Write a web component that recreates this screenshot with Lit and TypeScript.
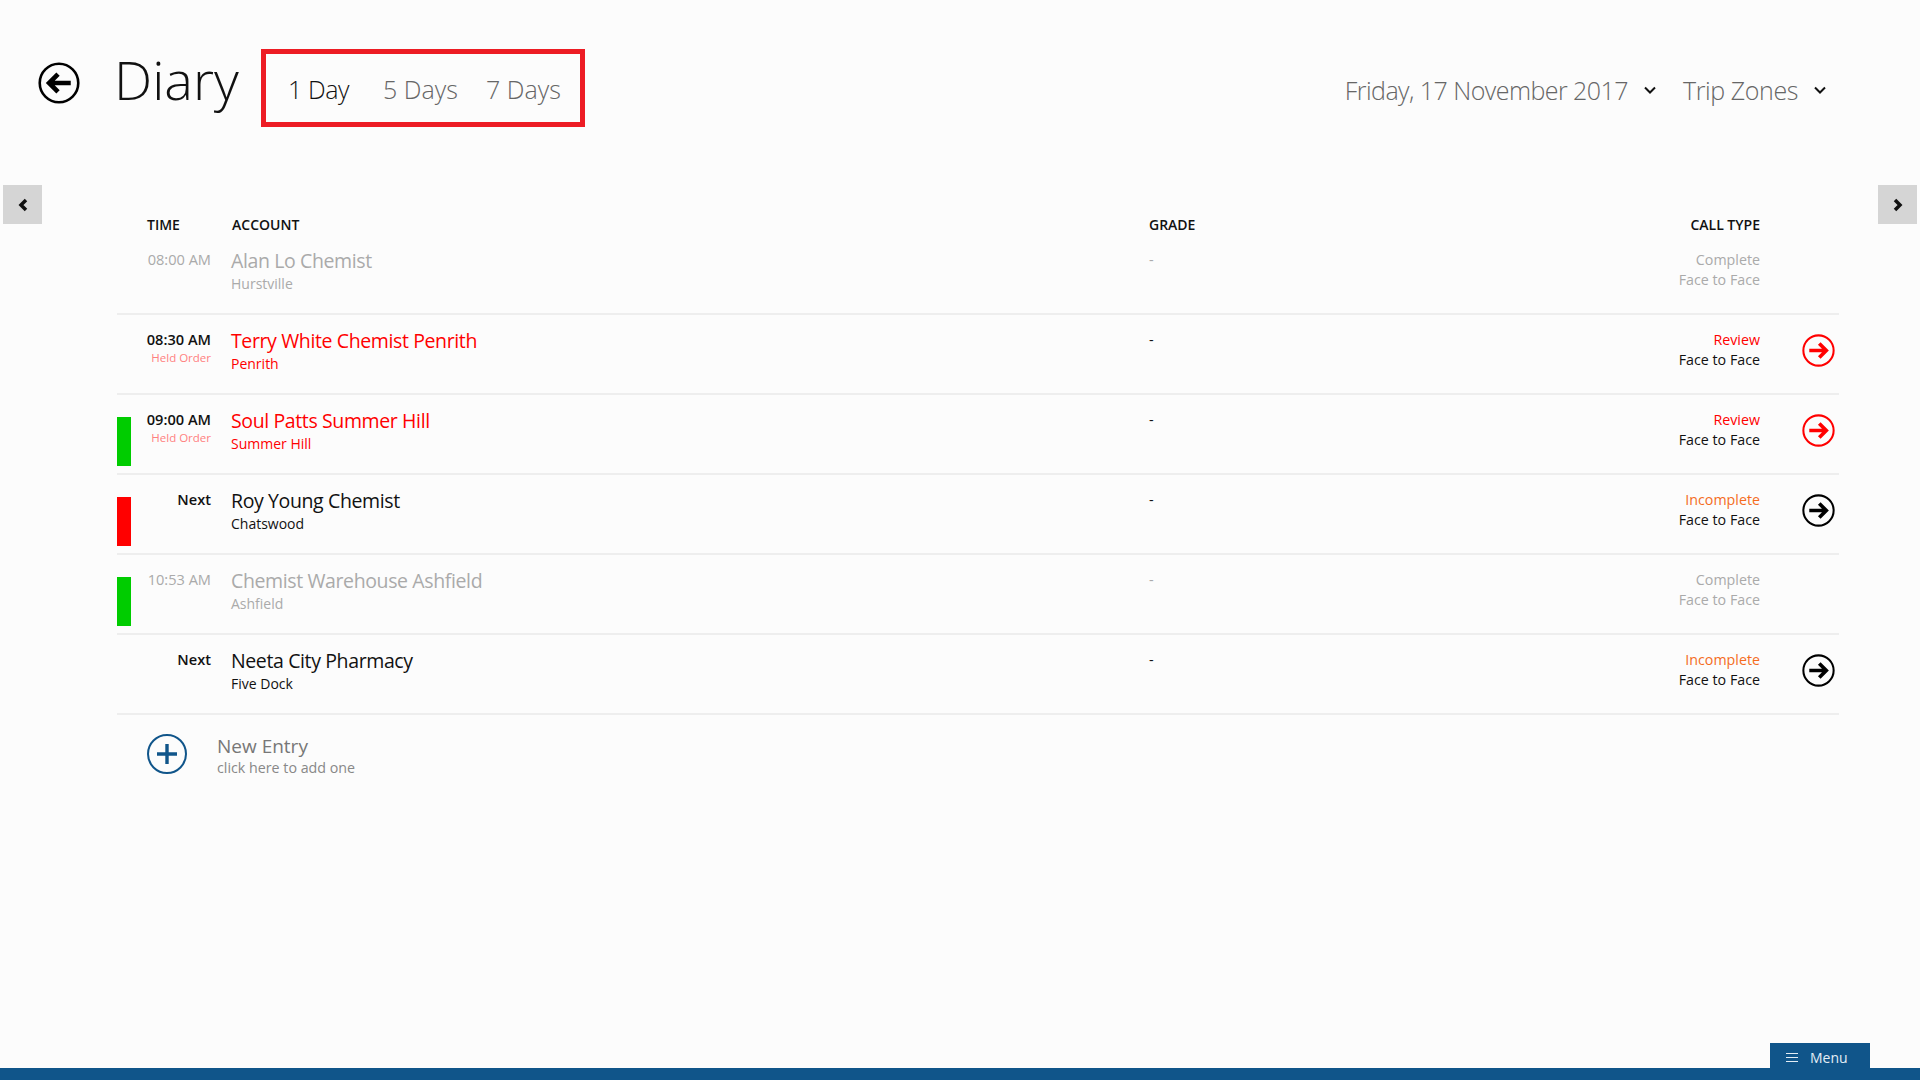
import { LitElement, html, css, svg } from "lit";
import { customElement } from "lit/decorators.js";

type Row = {
  time: string; held?: boolean; name: string; sub: string; status: string;
  tone: "done" | "red" | "plain"; statusCls: string; bar?: string; arrow?: string; next?: boolean;
};

const rows: Row[] = [
  { time: "08:00 AM", name: "Alan Lo Chemist", sub: "Hurstville", status: "Complete", tone: "done", statusCls: "" },
  { time: "08:30 AM", held: true, name: "Terry White Chemist Penrith", sub: "Penrith", status: "Review", tone: "red", statusCls: "review", arrow: "#ff0000" },
  { time: "09:00 AM", held: true, name: "Soul Patts Summer Hill", sub: "Summer Hill", status: "Review", tone: "red", statusCls: "review", bar: "green", arrow: "#ff0000" },
  { time: "Next", next: true, name: "Roy Young Chemist", sub: "Chatswood", status: "Incomplete", tone: "plain", statusCls: "incomplete", bar: "red", arrow: "#000000" },
  { time: "10:53 AM", name: "Chemist Warehouse Ashfield", sub: "Ashfield", status: "Complete", tone: "done", statusCls: "", bar: "green" },
  { time: "Next", next: true, name: "Neeta City Pharmacy", sub: "Five Dock", status: "Incomplete", tone: "plain", statusCls: "incomplete", arrow: "#000000" },
];

const chevronDown = svg`<svg width="14" height="10" viewBox="0 0 14 10"><path d="M2 2.5 L7 7.5 L12 2.5" fill="none" stroke="#111" stroke-width="2"/></svg>`;
const circleArrow = (c: string, size: number, left = false) => svg`<svg width=${size} height=${size} viewBox="0 0 34 34"><circle cx="17" cy="17" r="15.6" fill="none" stroke=${c} stroke-width="2.1"/><g transform=${left ? "rotate(180 17 17)" : ""}><path d="M7.5 17 H25 M17.8 9.8 L25 17 L17.8 24.2" fill="none" stroke=${c} stroke-width="3.8"/></g></svg>`;

@customElement("app-root")
export class AppRoot extends LitElement {
  static styles = css`
    :host { display: flex; flex-direction: column; height: 100vh; background: #fcfcfc; color: #111; font-family: "Open Sans", "Noto Sans", sans-serif; overflow: hidden; }
    .top { display: flex; align-items: flex-start; padding: 49px 93px 0 38px; height: 185px; box-sizing: border-box; flex: none; }
    .back { margin-top: 13px; width: 42px; height: 42px; }
    .title { margin: -6px 0 0 34px; font-size: 54px; line-height: 72px; font-weight: 300; width: 147px; color: #111; }
    .tabs { display: flex; box-sizing: border-box; height: 78px; width: 324px; border: 5px solid #ed1c24; padding: 16px 0 0 22px; font-size: 25px; line-height: 38px; font-weight: 300; color: #666; }
    .tabs span:nth-child(1) { width: 95px; color: #111; letter-spacing: -0.4px; }
    .tabs span:nth-child(2) { width: 103px; }
    .drops { margin-left: auto; display: flex; align-items: center; padding-top: 22px; font-size: 25px; line-height: 38px; font-weight: 300; color: #666; letter-spacing: -0.4px; }
    .drops span:first-child { letter-spacing: -0.55px; }
    .drops svg { margin-left: 15px; }
    .drops span + svg + span { margin-left: 26px; }
    .main { display: grid; grid-template-columns: 39px 1fr 39px; column-gap: 39px; padding: 0 3px; flex: 1; align-items: start; }
    .list { padding-left: 36px; }
    .nav { width: 39px; height: 39px; background: #d5d5d5; display: flex; align-items: center; justify-content: center; }
    .head, .row { display: grid; grid-template-columns: 14px 80px 20px 918px 1fr 200px 79px; }
    .head { padding-top: 30px; height: 20px; font-size: 14px; line-height: 20px; font-weight: 600; color: #111; }
    .head .t { grid-column: 2; padding-left: 16px; }
    .head .a { grid-column: 4; padding-left: 1px; }
    .head .c { text-align: right; }
    .row { height: 80px; box-sizing: border-box; border-bottom: 2px solid #eee; }
    .bar { width: 14px; height: 49px; margin-top: 22px; }
    .bar.green { background: #00cc00; }
    .bar.red { background: #ff0000; }
    .time { grid-column: 2; padding-top: 14px; text-align: right; font-size: 14.6px; line-height: 20px; }
    .time .held { display: block; font-size: 11.5px; line-height: 16px; margin-top: 1px; color: #ff8080; font-weight: 400; }
    .time.strong { font-weight: 600; }
    .acct { grid-column: 4; padding-top: 14px; font-size: 19.5px; line-height: 24px; letter-spacing: -0.38px; }
    .acct small { display: block; font-size: 14px; line-height: 20px; margin-top: 1px; letter-spacing: 0; }
    .grade { padding-top: 15px; font-size: 14.5px; line-height: 20px; }
    .call { padding-top: 15px; text-align: right; font-size: 14.25px; line-height: 20px; }
    .call span { display: block; }
    .review { color: #ff0000; }
    .incomplete { color: #f46c1e; }
    .arrow { padding: 19px 0 0 42px; }
    .row.done .time, .row.done .acct, .row.done .grade, .row.done .call { color: #aaa; }
    .row.red .acct { color: #ff0000; }
    .new { display: flex; padding: 19px 0 0 30px; }
    .new .txt { margin-left: 30px; color: #777; }
    .new b { display: block; font-weight: 400; font-size: 19px; line-height: 24px; }
    .new i { display: block; font-style: normal; font-size: 14.25px; line-height: 19px; color: #888; }
    .footer { display: flex; justify-content: flex-end; padding-right: 50px; flex: none; }
    .menu { display: flex; align-items: center; width: 100px; height: 25px; box-sizing: border-box; padding: 3px 0 0 16px; background: #10558a; color: #e3edf5; font-size: 14px; }
    .menu svg { margin-right: 12px; }
    .band { height: 12px; background: #10558a; flex: none; }
  `;

  render() {
    return html`
      <div class="top">
        <div class="back">${circleArrow("#000", 42, true)}</div>
        <div class="title">Diary</div>
        <div class="tabs"><span>1 Day</span><span>5 Days</span><span>7 Days</span></div>
        <div class="drops">
          <span>Friday, 17 November 2017</span>${chevronDown}
          <span>Trip Zones</span>${chevronDown}
        </div>
      </div>
      <div class="main">
        <div class="nav"><svg width="12" height="14" viewBox="0 0 12 14"><path d="M9 2 L4 7 L9 12" fill="none" stroke="#111" stroke-width="3.5"/></svg></div>
        <div class="list">
          <div class="head">
            <div class="t">TIME</div><div class="a">ACCOUNT</div><div>GRADE</div><div class="c">CALL TYPE</div>
          </div>
          ${rows.map((r) => html`
            <div class="row ${r.tone}">
              <div class=${r.bar ? `bar ${r.bar}` : ""}></div>
              <div class="time ${r.next || r.tone !== "done" ? "strong" : ""}">${r.time}${r.held ? html`<span class="held">Held Order</span>` : ""}</div>
              <div class="acct">${r.name}<small>${r.sub}</small></div>
              <div class="grade">-</div>
              <div class="call"><span class=${r.statusCls}>${r.status}</span><span>Face to Face</span></div>
              <div class="arrow">${r.arrow ? circleArrow(r.arrow, 33) : ""}</div>
            </div>`)}
          <div class="new">
            <svg width="40" height="40" viewBox="0 0 40 40"><circle cx="20" cy="20" r="19" fill="none" stroke="#10558a" stroke-width="2"/><path d="M10 20 H30 M20 10 V30" fill="none" stroke="#10558a" stroke-width="3.4"/></svg>
            <div class="txt"><b>New Entry</b><i>click here to add one</i></div>
          </div>
        </div>
        <div class="nav"><svg width="12" height="14" viewBox="0 0 12 14"><path d="M3 2 L8 7 L3 12" fill="none" stroke="#111" stroke-width="3.5"/></svg></div>
      </div>
      <div class="footer">
        <div class="menu"><svg width="12" height="11" viewBox="0 0 12 11"><path d="M0 1.5 H12 M0 5.5 H12 M0 9.5 H12" stroke="#e3edf5" stroke-width="1.2"/></svg>Menu</div>
      </div>
      <div class="band"></div>
    `;
  }
}
